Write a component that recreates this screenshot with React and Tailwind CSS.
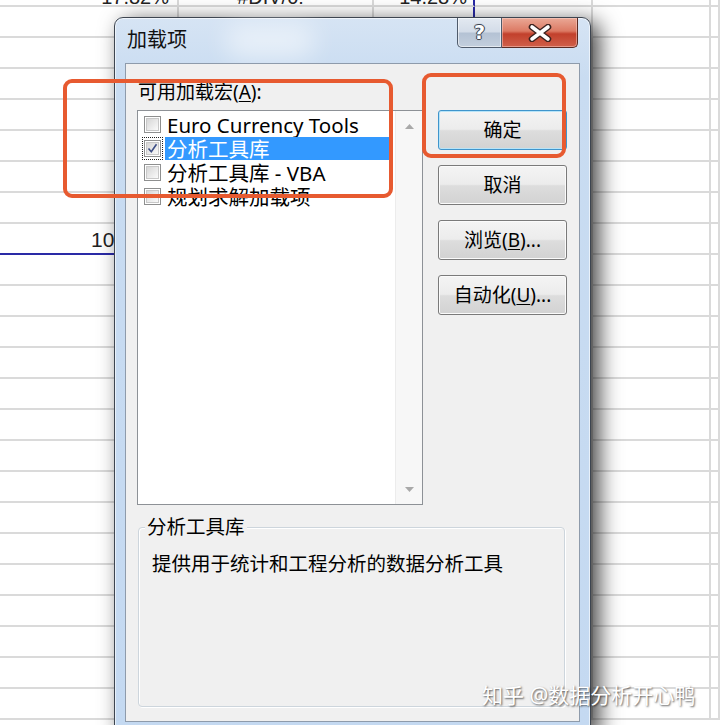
import clsx from 'clsx'

const FONT = "font-['Noto_Sans','Noto_Sans_CJK_SC',sans-serif]"

// spreadsheet columns behind the dialog
const COL_W = ['w-[179px]', 'w-[195px]', 'w-[101px]', 'w-[118px]', 'w-[118px]', 'flex-1']

const ITEMS = [
  { label: 'Euro Currency Tools', checked: false },
  { label: '分析工具库', checked: true, selected: true },
  { label: '分析工具库 - VBA', checked: false },
  { label: '规划求解加载项', checked: false },
]

function Cell({ col, row, children, align }) {
  const blueRight = col === 2
  const blueBottom = col === 0 && row === 8
  return (
    <div
      className={clsx(
        COL_W[col],
        'flex h-full shrink-0 items-end overflow-hidden border-b-2 border-r-2',
        blueRight ? 'border-r-[#2a2aa6]' : 'border-r-[#dadada]',
        blueBottom ? 'border-b-[#2a2aa6]' : 'border-b-[#dadada]',
        align
      )}
    >
      {children}
    </div>
  )
}

function Sheet() {
  const rows = Array.from({ length: 24 }, (_, i) => i)
  return (
    <div className="-mt-[24px] flex flex-col font-['Liberation_Sans',sans-serif] text-[#222]">
      {rows.map((r) => (
        <div key={r} className="flex h-[31px] shrink-0">
          {COL_W.map((_, c) => {
            let content = null
            let align = ''
            if (r === 0 && c === 0) {
              content = <span className="pr-[8px] text-[20px] leading-[16px]">17.82%</span>
              align = 'justify-end'
            } else if (r === 0 && c === 1) {
              content = <span className="pr-[10px] text-[20px] leading-[16px]">#DIV/0!</span>
              align = 'justify-center'
            } else if (r === 0 && c === 2) {
              content = <span className="pr-[6px] text-[20px] leading-[16px]">14.28%</span>
              align = 'justify-end'
            } else if (r === 8 && c === 0) {
              content = <span className="pl-[91px] pb-[2px] text-[21px] leading-[22px]">10</span>
            }
            return (
              <Cell key={c} col={c} row={r} align={align}>
                {content}
              </Cell>
            )
          })}
        </div>
      ))}
    </div>
  )
}

function CaptionButtons() {
  return (
    <div className="mr-[2px] flex h-[30px]">
      <div className="flex w-[45px] items-center justify-center rounded-bl-[5px] border border-t-0 border-[#4f5b6b] bg-[linear-gradient(to_bottom,#e3e9f1_0%,#d3dce8_48%,#b4c2d4_52%,#c3cfdd_100%)] shadow-[inset_0_0_0_1px_rgba(255,255,255,0.55)]">
        <span className="font-['DejaVu_Sans',sans-serif] text-[19px] font-bold leading-none text-white [text-shadow:1px_0_0_#3a4452,-1px_0_0_#3a4452,0_1px_0_#3a4452,0_-1px_0_#3a4452,0_0_2px_#3a4452]">
          ?
        </span>
      </div>
      <div className="flex w-[76px] items-center justify-center rounded-br-[5px] border border-l-0 border-t-0 border-[#5a2a22] bg-[linear-gradient(to_bottom,#eaa896_0%,#dc7a64_45%,#c2402c_55%,#d0604a_100%)] shadow-[inset_0_0_0_1px_rgba(255,220,210,0.45)]">
        <svg width="28" height="18" viewBox="0 0 28 18">
          <path d="M6 3 L22 15 M22 3 L6 15" stroke="#3b2320" strokeWidth="6.5" strokeLinecap="round" fill="none" />
          <path d="M6 3 L22 15 M22 3 L6 15" stroke="#ffffff" strokeWidth="3.6" strokeLinecap="round" fill="none" />
        </svg>
      </div>
    </div>
  )
}

function Checkbox({ checked }) {
  return (
    <div className="flex h-[17px] w-[17px] items-center justify-center border border-[#8e8f8f] bg-white">
      <div className="flex h-[13px] w-[13px] items-center justify-center border border-[#c8c8c8] bg-[linear-gradient(135deg,#d6d6d6_0%,#ececec_60%,#fafafa_100%)]">
        {checked && (
          <svg width="11" height="11" viewBox="0 0 11 11">
            <path d="M1.5 5.5 L4.3 8.8 L9.5 1.2" stroke="#3d4f86" strokeWidth="1.6" fill="none" />
          </svg>
        )}
      </div>
    </div>
  )
}

function ListItem({ item }) {
  return (
    <div className="flex h-[24px] items-end pl-[4px]">
      <div
        className={clsx(
          'flex h-[23px] w-[21px] items-center justify-center border border-dotted',
          item.selected ? 'border-[#222]' : 'border-transparent'
        )}
      >
        <Checkbox checked={item.checked} />
      </div>
      <div
        className={clsx(
          'ml-[2px] mr-[5px] flex h-[23px] flex-1 items-center px-[2px] text-[20.5px] leading-[20px] whitespace-nowrap',
          item.selected ? 'bg-[#3399ff] text-white' : 'text-black'
        )}
      >
        {item.label}
      </div>
    </div>
  )
}

function ListBox() {
  return (
    <div className="flex h-[395px] border border-[#8d9196] bg-white">
      <div className="flex-1 pt-[1px]">
        {ITEMS.map((it) => (
          <ListItem key={it.label} item={it} />
        ))}
      </div>
      <div className="flex w-[27px] flex-col justify-between border-l border-[#ececec] bg-[#f7f7f7]">
        <div className="flex h-[30px] items-center justify-center">
          <svg width="9" height="5" viewBox="0 0 9 5">
            <path d="M0 5 L4.5 0 L9 5 Z" fill="#a9a9a9" />
          </svg>
        </div>
        <div className="flex h-[30px] items-center justify-center">
          <svg width="9" height="5" viewBox="0 0 9 5">
            <path d="M0 0 L9 0 L4.5 5 Z" fill="#a9a9a9" />
          </svg>
        </div>
      </div>
    </div>
  )
}

function DlgButton({ children, isDefault }) {
  return (
    <button
      className={clsx(
        'h-[40px] w-full rounded-[3px] border text-[19px] leading-none text-black bg-[linear-gradient(to_bottom,#f4f4f4_0%,#ececec_48%,#dddddd_52%,#d2d2d2_100%)]',
        isDefault
          ? 'border-[#3f95cc] shadow-[inset_0_0_0_1px_#b8e4f8]'
          : 'border-[#7a7a7a] shadow-[inset_0_0_0_1px_#fbfbfb]'
      )}
    >
      {children}
    </button>
  )
}

function Dialog() {
  return (
    <div className="absolute left-[114px] top-[17px] w-[477px] rounded-t-[9px] border border-[#3d4550] bg-[linear-gradient(to_bottom,#d6e4f4_0px,#c9dcf1_60px,#c4d9f1_100%)] px-[10px] pb-[10px] shadow-[inset_0_0_0_1px_rgba(255,255,255,0.6),8px_5px_22px_rgba(0,0,0,0.75)]">
      {/* blurred spreadsheet behind the glass title bar */}
      <div className="pointer-events-none absolute left-[110px] top-[6px] h-[34px] w-[90px] rounded-full bg-white/50 blur-md" />
      <div className="relative flex h-[45px] items-start justify-between">
        <div className="mt-[10px] pl-[2px] text-[20px] leading-[24px] text-[#111]">加载项</div>
        <CaptionButtons />
      </div>

      <div className="relative border border-[#8e9bab] bg-[#f0f0f0] pb-[14px] pl-[11px] pr-[12px] pt-[16px] text-black">
        <div className="flex gap-[15px]">
          <div className="flex w-[286px] flex-col">
            <div className="mb-[6px] h-[24px] pl-[1px] text-[19px] leading-[24px]">
              可用加载宏(<span className="underline underline-offset-2">A</span>):
            </div>
            <ListBox />
          </div>
          <div className="flex w-[129px] flex-col gap-[15px] pt-[30px]">
            <DlgButton isDefault>确定</DlgButton>
            <DlgButton>取消</DlgButton>
            <DlgButton>
              浏览(<span className="underline underline-offset-2">B</span>)...
            </DlgButton>
            <DlgButton>
              自动化(<span className="underline underline-offset-2">U</span>)...
            </DlgButton>
          </div>
        </div>

        <div className="ml-[1px] mr-[2px] mt-[22px] h-[180px] rounded-[4px] border border-[#cdd5dc] shadow-[inset_1px_1px_0_#ffffff,1px_1px_0_#ffffff]">
          <div className="-mt-[13px] ml-[6px] w-fit bg-[#f0f0f0] px-[2px] text-[19.5px] leading-[24px]">分析工具库</div>
          <div className="mt-[13px] pl-[13px] text-[19.5px] leading-[24px]">提供用于统计和工程分析的数据分析工具</div>
        </div>
      </div>
    </div>
  )
}

export default function App() {
  return (
    <div className={clsx('relative h-[725px] w-[720px] overflow-hidden bg-white', FONT)}>
      <Sheet />
      <Dialog />

      {/* orange annotation boxes */}
      <div className="absolute left-[63px] top-[79px] h-[119px] w-[330px] rounded-[9px] border-4 border-[#e75a30]" />
      <div className="absolute left-[422px] top-[73px] h-[85px] w-[144px] rounded-[9px] border-4 border-[#e75a30]" />

      {/* watermark */}
      <div className="absolute left-[482px] top-[681px] text-[21px] leading-[28px] text-white [text-shadow:1px_1px_2px_rgba(0,0,0,0.65)]">
        知乎 @数据分析开心鸭
      </div>
    </div>
  )
}
